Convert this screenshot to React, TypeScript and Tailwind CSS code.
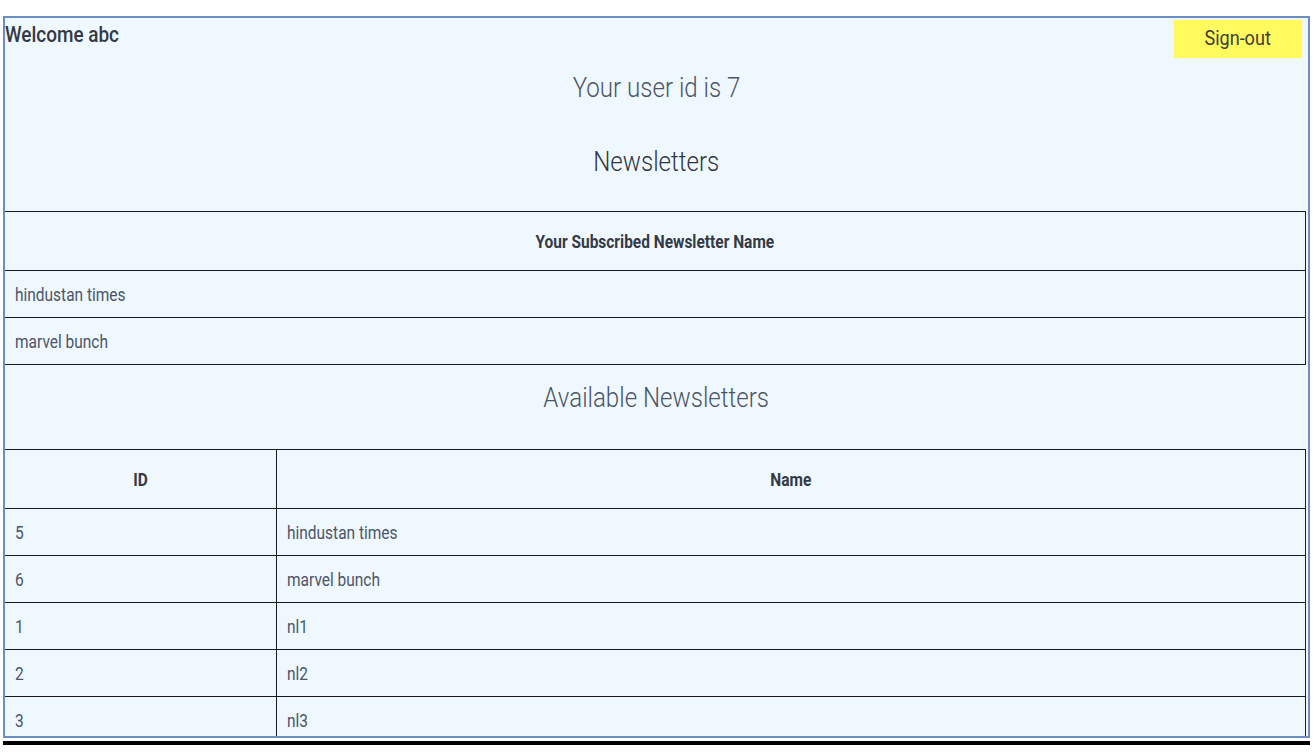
import React from "react";

const subscribed = ["hindustan times", "marvel bunch"];
const available = [
  { id: "5", name: "hindustan times" },
  { id: "6", name: "marvel bunch" },
  { id: "1", name: "nl1" },
  { id: "2", name: "nl2" },
  { id: "3", name: "nl3" },
];

function L({ children }: { children: React.ReactNode }) {
  return <span className="inline-block scale-x-[0.86] origin-left whitespace-nowrap">{children}</span>;
}
function C({ children }: { children: React.ReactNode }) {
  return <span className="inline-block scale-x-[0.86] origin-center whitespace-nowrap">{children}</span>;
}

export default function App() {
  return (
    <div
      className="w-[1316px] h-[752px] bg-white pt-[16px] pl-[3px] overflow-hidden"
      style={{ fontFamily: "Roboto, 'Liberation Sans', sans-serif" }}
    >
      <div className="w-[1307px] h-[722px] border-2 border-[#6d8ec3] bg-[#f0f8ff] overflow-hidden">
        <div className="flex justify-between items-start h-[41px]">
          <div className="pt-[4px] text-[22px] leading-[26px] font-medium text-[#333a44]">
            <L>Welcome abc</L>
          </div>
          <button className="mt-[1px] mr-[5px] w-[130px] h-[40px] bg-[#fffa5e] border border-[#f4f6ea] rounded-[2px] text-[21px] text-[#3d3d3d]">
            <C>Sign-out</C>
          </button>
        </div>
        <div className="h-[58px] flex items-center justify-center text-[28px] font-light text-[#4b5563]">
          <C>Your user id is 7</C>
        </div>
        <div className="h-[94px] pt-[29px] text-center text-[28px] leading-[32px] font-light text-[#2f3640]">
          <C>Newsletters</C>
        </div>
        <table className="w-[1301px] border-collapse text-[18px] text-[#4a5568]">
          <thead>
            <tr className="h-[59px] border-t border-b border-[#1a1a1a]">
              <th className="font-bold text-[#333a44] text-center border-r border-[#1a1a1a]">
                <C>Your Subscribed Newsletter Name</C>
              </th>
            </tr>
          </thead>
          <tbody>
            {subscribed.map((s) => (
              <tr key={s} className="h-[47px] border-b border-[#1a1a1a]">
                <td className="pl-[10px] border-r border-[#1a1a1a]">
                  <L>{s}</L>
                </td>
              </tr>
            ))}
          </tbody>
        </table>
        <div className="h-[84px] flex items-center justify-center pb-[18px] text-[28px] font-light text-[#4b5563]">
          <C>Available Newsletters</C>
        </div>
        <table className="w-[1301px] border-collapse text-[18px] text-[#4a5568]">
          <thead>
            <tr className="h-[59px] border-t border-b border-[#1a1a1a]">
              <th className="w-[271px] font-bold text-[#333a44] text-center border-r border-[#1a1a1a]">
                <C>ID</C>
              </th>
              <th className="font-bold text-[#333a44] text-center border-r border-[#1a1a1a]">
                <C>Name</C>
              </th>
            </tr>
          </thead>
          <tbody>
            {available.map((n) => (
              <tr key={n.id} className="h-[47px] border-b border-[#1a1a1a]">
                <td className="pl-[10px] border-r border-[#1a1a1a]">
                  <L>{n.id}</L>
                </td>
                <td className="pl-[10px] border-r border-[#1a1a1a]">
                  <L>{n.name}</L>
                </td>
              </tr>
            ))}
          </tbody>
        </table>
      </div>
      <div className="w-[1307px] h-[4px] mt-[3px] bg-black" />
    </div>
  );
}
